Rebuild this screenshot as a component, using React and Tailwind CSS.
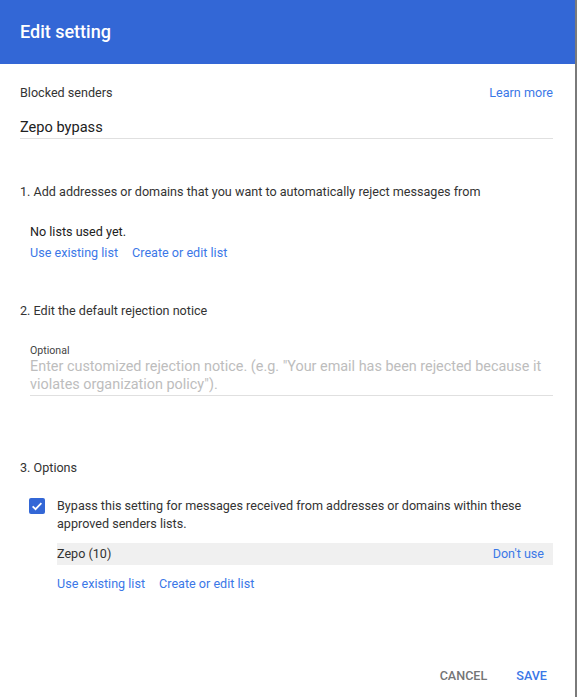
import React from "react";

const LINK = "text-[#3b78e7]";

const ListLinks = ({ className = "" }) => (
    <div className={`flex gap-[14px] text-[12.6px] leading-[20px] ${LINK} ${className}`}>
        <a href="#">Use existing list</a>
        <a href="#">Create or edit list</a>
    </div>
);

export default function App() {
    return (
        <div className="flex h-[697px] w-[577px] bg-white font-['Roboto',sans-serif] text-[#212121]">
            <div className="flex w-[575px] flex-col">
                <header className="flex h-[64px] shrink-0 items-center bg-[#3367d6] px-[20px] pb-[2px]">
                    <h1 className="text-[18px] font-medium text-white">Edit setting</h1>
                </header>

                <div className="flex flex-1 flex-col pl-[20px] pr-[22px]">
                    <div className="mt-[19px] flex justify-between text-[12.6px] leading-[20px]">
                        <span className="text-[#333]">Blocked senders</span>
                        <a href="#" className={LINK}>Learn more</a>
                    </div>

                    <div className="mt-[13px] border-b border-[#e0e0e0] text-[14.6px] leading-[22px]">
                        Zepo bypass
                    </div>

                    <div className="mt-[43px] text-[12.6px] leading-[20px] text-[#333]">
                        1. Add addresses or domains that you want to automatically reject messages from
                    </div>
                    <div className="mt-[20px] pl-[10px]">
                        <div className="text-[12.6px] leading-[20px]">No lists used yet.</div>
                        <ListLinks className="mt-[1px]" />
                    </div>

                    <div className="mt-[38px] text-[12.6px] leading-[20px] text-[#333]">
                        2. Edit the default rejection notice
                    </div>
                    <div className="ml-[10px] mt-[23px] border-b border-[#e0e0e0] pb-[1px]">
                        <div className="text-[10.6px] leading-[14px] text-[#444]">Optional</div>
                        <div className="text-[14.4px] leading-[18px] text-[#bdbdbd]">
                            Enter customized rejection notice. (e.g. "Your email has been rejected because it violates organization policy").
                        </div>
                    </div>

                    <div className="mt-[62px] text-[12.6px] leading-[20px] text-[#333]">3. Options</div>
                    <div className="mt-[19px] flex pl-[9px]">
                        <div className="mt-[1px] flex h-[16px] w-[16px] shrink-0 items-center justify-center rounded-[2px] bg-[#3367d6]">
                            <svg viewBox="0 0 24 24" className="h-[14px] w-[14px]" fill="none" stroke="white" strokeWidth="3">
                                <path d="M4.5 12.5l5 5L19.5 7" />
                            </svg>
                        </div>
                        <div className="ml-[12px] flex-1">
                            <div className="text-[12.6px] leading-[18px] text-[#333]">
                                Bypass this setting for messages received from addresses or domains within these approved senders lists.
                            </div>
                            <div className="mt-[10px] flex h-[22px] items-center justify-between bg-[#f0f0f0] pr-[9px] text-[12.6px]">
                                <span className="text-[#333]">Zepo (10)</span>
                                <a href="#" className={LINK}>Don't use</a>
                            </div>
                            <ListLinks className="mt-[9px]" />
                        </div>
                    </div>

                    <div className="mt-auto mb-[11px] flex justify-end gap-[29px] pr-[6px] text-[12.6px] font-medium leading-[20px]">
                        <button className="text-[#757575]">CANCEL</button>
                        <button className={LINK}>SAVE</button>
                    </div>
                </div>
            </div>
            <div className="w-[2px] bg-[#7a7a7a]" />
        </div>
    );
}
